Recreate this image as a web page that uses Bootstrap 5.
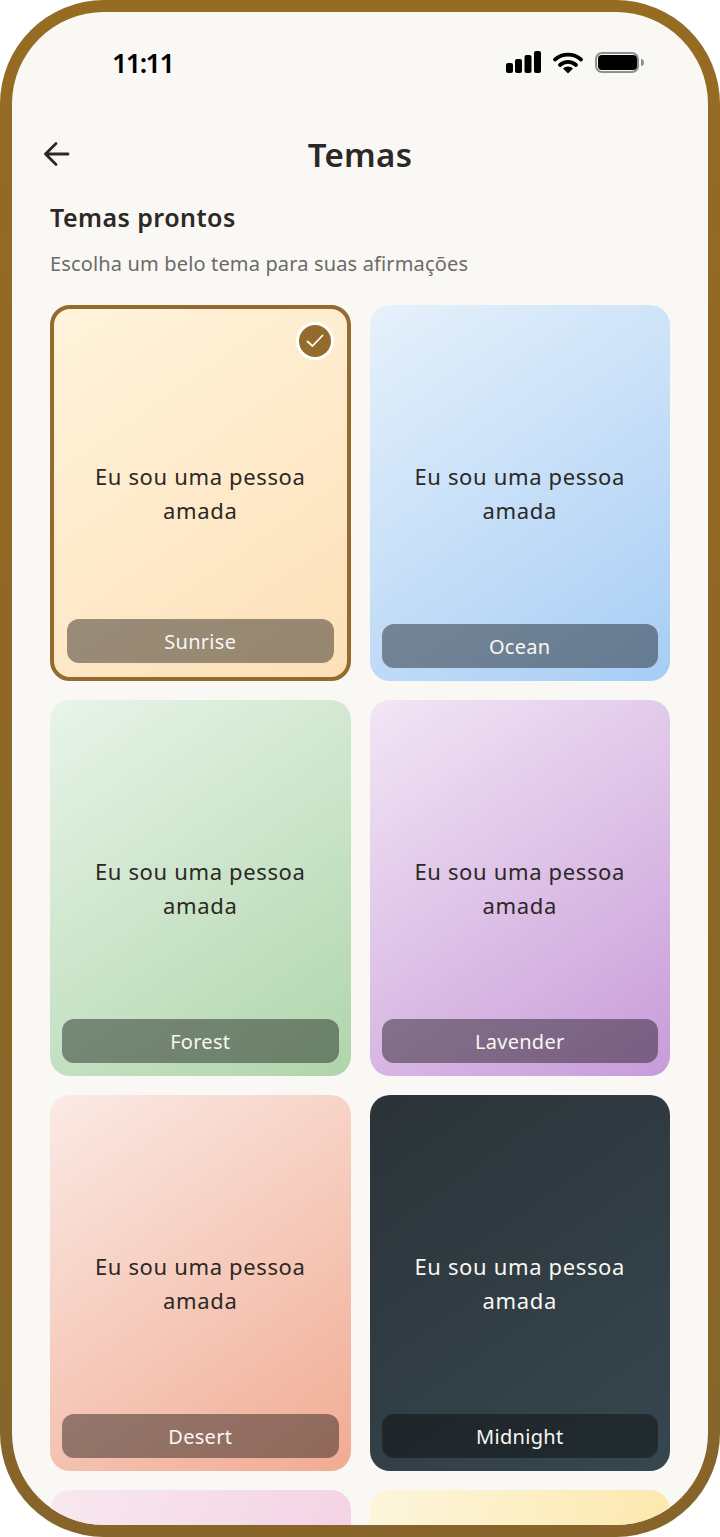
<!DOCTYPE html>
<html lang="pt">
<head>
  <meta charset="UTF-8" />
  <meta name="viewport" content="width=device-width, initial-scale=1.0"/>
  <title>Temas</title>
  <link rel="stylesheet" href="https://cdn.jsdelivr.net/npm/bootstrap@5.3.0/dist/css/bootstrap.min.css" />
  <style>
    html, body { height: 100%; background: #fff; overflow: hidden; }
    body { font-family: "Noto Sans", "Open Sans", sans-serif; color: #2b2825; }
    .phone { width: 720px; height: 1537px; padding: 12px; border-radius: 104px; background: linear-gradient(180deg, #966b22, #86642a); }
    .screen { height: 100%; border-radius: 92px; background: #faf8f4; overflow: hidden; }
    .status-bar { height: 78px; padding: 28px 64px 0 100px; }
    .clock { font-size: 27px; font-weight: 600; line-height: 46px; color: #000; letter-spacing: -1.6px; }
    .top-bar { height: 80px; margin-top: 25px; padding-left: 30px; position: relative; }
    .top-title { font-size: 33px; font-weight: 600; line-height: 40px; left: 0; right: 0; top: 20px; letter-spacing: .3px; }
    .intro { padding: 0 38px; }
    .intro-title { font-size: 25px; font-weight: 600; line-height: 34px; margin: 5px 0 0; letter-spacing: .45px; }
    .intro-sub { font-size: 20px; line-height: 30px; color: #6d6a66; margin: 15px 0 0; letter-spacing: .15px; }
    .theme-grid { display: grid; grid-template-columns: 1fr 1fr; gap: 19px; padding: 0 38px; margin-top: 26px; }
    .theme { height: 376px; border-radius: 20px; font-size: 22px; line-height: 34px; letter-spacing: .65px; }
    .theme.active { border: 4px solid #946b2d; }
    .theme-label { left: 12px; right: 12px; bottom: 13px; height: 44px; border-radius: 12px; font-size: 20px; line-height: 46px; color: #f9f7f3; letter-spacing: .3px; }
    .theme.active .theme-label { left: 13px; right: 13px; bottom: 14px; }
    .check { top: 13px; right: 13px; width: 38px; height: 38px; border-radius: 50%; background: #946b2d; border: 3px solid #fff; }
    .t-sunrise { background: linear-gradient(145deg, #fff4dc, #fde0b8); }
    .t-ocean { background: linear-gradient(145deg, #e6f1fb, #a7cdf5); }
    .t-forest { background: linear-gradient(145deg, #e8f4e9, #afd5ab); }
    .t-lavender { background: linear-gradient(145deg, #f2e6f5, #c89bd9); }
    .t-desert { background: linear-gradient(145deg, #fbeae5, #f1ab92); }
    .t-midnight { background: linear-gradient(145deg, #2b3338, #37474f); color: #f9f7f3; }
    .t-rose { background: linear-gradient(100deg, #f8e8f0, #f3cfe2); }
    .t-honey { background: linear-gradient(100deg, #fdf6dc, #fce6a6); }
    .label-dim { background: rgba(0, 0, 0, .4); }
    .label-deep { background: rgba(0, 0, 0, .38); }
  </style>
</head>
<body>
  <div class="phone">
    <div class="screen">
      <div class="status-bar d-flex justify-content-between align-items-start">
        <div class="clock">11:11</div>
        <svg width="138" height="26" viewBox="0 0 138 26" class="mt-2">
          <rect x="0" y="15" width="7" height="10" rx="2" fill="#000"/>
          <rect x="9" y="11" width="7" height="14" rx="2" fill="#000"/>
          <rect x="18.500" y="7" width="7" height="18" rx="2" fill="#000"/>
          <rect x="28" y="3" width="7" height="22" rx="2" fill="#000"/>
          <path d="M49 11.500a20 20 0 0 1 26 0M54 17a12 12 0 0 1 16 0" fill="none" stroke="#000" stroke-width="3.800" stroke-linecap="round"/>
          <path d="M57 20.500a7 7 0 0 1 10 0L62 25.500z" fill="#000"/>
          <rect x="90" y="5" width="42" height="19" rx="6" fill="none" stroke="#8e8e8e" stroke-width="2"/>
          <rect x="92" y="7" width="39" height="15" rx="4" fill="#000"/>
          <path d="M135 11c2 0 3 1.500 3 3.500s-1 3.500-3 3.500z" fill="#8e8e8e"/>
        </svg>
      </div>
      <div class="top-bar">
        <svg width="30" height="30" viewBox="0 0 30 30" class="mt-4">
          <path d="M26 15H3.500M14 4.500 3.500 15 14 25.500" fill="none" stroke="#2b2825" stroke-width="2.800" stroke-linecap="round" stroke-linejoin="round"/>
        </svg>
        <div class="top-title position-absolute text-center">Temas</div>
      </div>
      <div class="intro">
        <h2 class="intro-title">Temas prontos</h2>
        <p class="intro-sub">Escolha um belo tema para suas afirmações</p>
      </div>
      <div class="theme-grid">
        <div class="theme active t-sunrise position-relative d-flex align-items-center justify-content-center text-center">
          <div>Eu sou uma pessoa<br>amada</div>
          <div class="check position-absolute d-flex align-items-center justify-content-center">
            <svg width="18" height="14" viewBox="0 0 18 14"><path d="M1.500 7.500 6.500 12 16.500 1.500" fill="none" stroke="#fff" stroke-width="1.800" stroke-linecap="round" stroke-linejoin="round"/></svg>
          </div>
          <div class="theme-label label-dim position-absolute">Sunrise</div>
        </div>
        <div class="theme t-ocean position-relative d-flex align-items-center justify-content-center text-center">
          <div>Eu sou uma pessoa<br>amada</div>
          <div class="theme-label label-dim position-absolute">Ocean</div>
        </div>
        <div class="theme t-forest position-relative d-flex align-items-center justify-content-center text-center">
          <div>Eu sou uma pessoa<br>amada</div>
          <div class="theme-label label-dim position-absolute">Forest</div>
        </div>
        <div class="theme t-lavender position-relative d-flex align-items-center justify-content-center text-center">
          <div>Eu sou uma pessoa<br>amada</div>
          <div class="theme-label label-dim position-absolute">Lavender</div>
        </div>
        <div class="theme t-desert position-relative d-flex align-items-center justify-content-center text-center">
          <div>Eu sou uma pessoa<br>amada</div>
          <div class="theme-label label-dim position-absolute">Desert</div>
        </div>
        <div class="theme t-midnight position-relative d-flex align-items-center justify-content-center text-center">
          <div>Eu sou uma pessoa<br>amada</div>
          <div class="theme-label label-deep position-absolute">Midnight</div>
        </div>
        <div class="theme t-rose"></div>
        <div class="theme t-honey"></div>
      </div>
    </div>
  </div>
  <script src="https://cdn.jsdelivr.net/npm/bootstrap@5.3.0/dist/js/bootstrap.bundle.min.js"></script>
</body>
</html>
